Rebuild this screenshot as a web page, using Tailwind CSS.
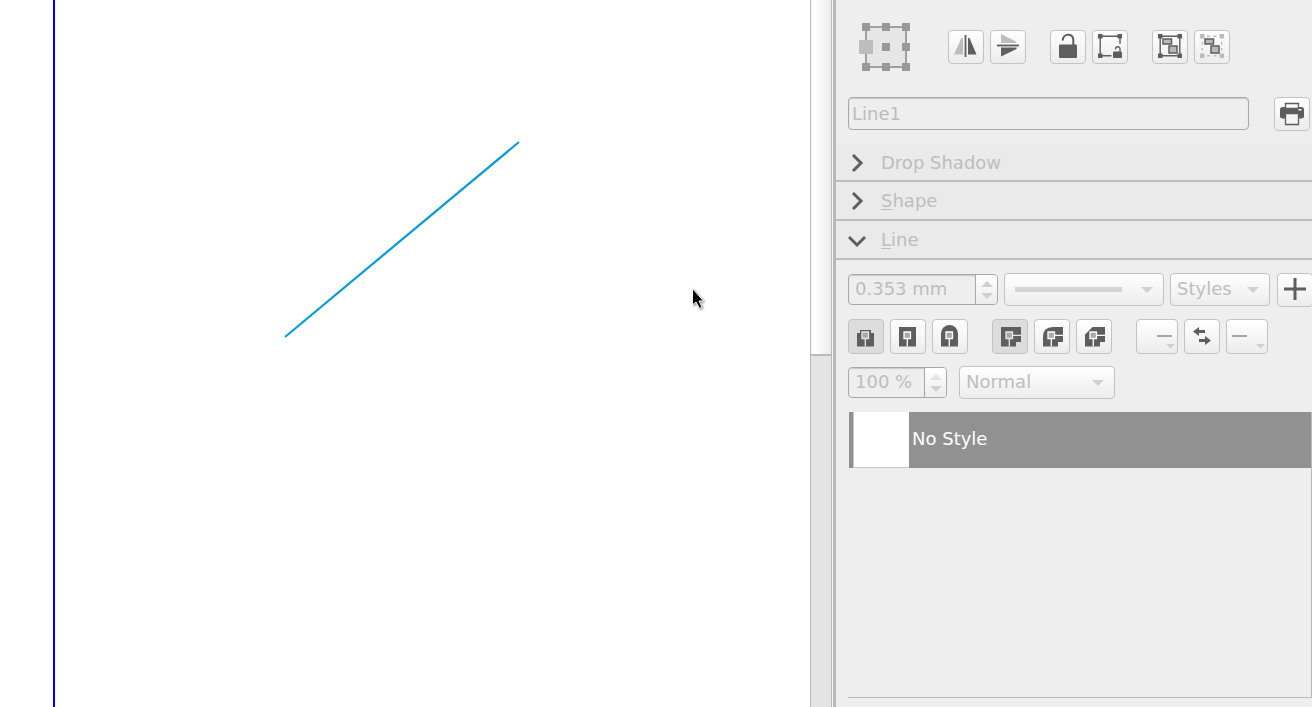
<!DOCTYPE html>
<html lang="en">
  <head>
    <meta charset="UTF-8" />
    <meta name="viewport" content="width=device-width, initial-scale=1.0" />
    <script src="https://cdn.jsdelivr.net/npm/@tailwindcss/browser@4"></script>
    <title>Properties</title>
  </head>
  <body class="flex h-screen overflow-hidden bg-[#eeeeee] font-['DejaVu_Sans',sans-serif] text-[18px] leading-[24px] text-[#bdbdbd]">
    <!-- canvas -->
    <main class="relative flex-1 bg-white pl-[53px]">
      <div class="h-full border-l-2 border-[#0000fa]"></div>
      <svg class="absolute left-[280px] top-[136px]" width="244" height="206" viewBox="280 136 244 206">
        <path d="M285 337 519 142" stroke="#069bde" stroke-width="2.200" />
      </svg>
      <svg class="absolute left-[690px] top-[286px]" width="18" height="26" viewBox="690 287 18 26">
        <path d="M692.500 289.500v16.500l3.500-3 3.500 6.500 2.500-1.500-3-6h4.500z" fill="#000" stroke="#fff" stroke-width="1" style="filter: drop-shadow(1px 1px 1px rgb(0 0 0 / 0.5))" />
      </svg>
    </main>

    <!-- scrollbar -->
    <div class="flex w-[22px] flex-col border-x border-[#b9b9b9] bg-[#e4e4e4]">
      <div class="h-[356px] border-b-2 border-[#b9b9b9] bg-linear-to-r from-white from-20% to-[#ebebeb]"></div>
    </div>
    <div class="w-1 border-l border-l-[#f6f6f6] bg-[#b9b9b9]"></div>

    <!-- properties panel -->
    <aside class="flex w-[476px] flex-col overflow-hidden">
      <div class="flex h-[97px] shrink-0 pl-[26px] pt-[23px]">
        <fieldset class="relative mr-[38px] grid h-12 w-12 grid-cols-3 content-between justify-between" aria-label="Basepoint">
          <span class="absolute inset-[3px] border-2 border-[#a0a0a0] bg-[#e6e6e6]"></span>
          <input type="radio" name="base" aria-label="Top left" class="relative size-2 appearance-none bg-[#999999]" />
          <input type="radio" name="base" aria-label="Top" class="relative size-2 appearance-none justify-self-center bg-[#999999]" />
          <input type="radio" name="base" aria-label="Top right" class="relative size-2 appearance-none justify-self-end bg-[#999999]" />
          <input type="radio" name="base" aria-label="Left" checked class="relative size-2 appearance-none bg-[#bdbdbd] ring-3 ring-[#bdbdbd]" />
          <input type="radio" name="base" aria-label="Center" class="relative size-2 appearance-none justify-self-center bg-[#999999]" />
          <input type="radio" name="base" aria-label="Right" class="relative size-2 appearance-none justify-self-end bg-[#999999]" />
          <input type="radio" name="base" aria-label="Bottom left" class="relative size-2 appearance-none bg-[#999999]" />
          <input type="radio" name="base" aria-label="Bottom" class="relative size-2 appearance-none justify-self-center bg-[#999999]" />
          <input type="radio" name="base" aria-label="Bottom right" class="relative size-2 appearance-none justify-self-end bg-[#999999]" />
        </fieldset>
        <div class="flex gap-6 pt-[7px]">
          <div class="flex gap-[6px]">
            <button aria-label="Flip horizontally" class="h-[34px] w-9 rounded border border-[#c3c3c3] bg-linear-to-b from-white to-[#ececec]">
              <svg width="34" height="32" viewBox="1 1 34 32">
                <path d="M6 24.500 13.500 8h1.500V24.500z" fill="#bdbdbd" />
                <path d="M20 8h1.500L28.500 24.500H20z" fill="#5e5e5e" />
                <path d="M17.500 5v22" stroke="#5e5e5e" stroke-width="1.800" />
              </svg>
            </button>
            <button aria-label="Flip vertically" class="h-[34px] w-9 rounded border border-[#c3c3c3] bg-linear-to-b from-white to-[#ececec]">
              <svg width="34" height="32" viewBox="1 1 34 32">
                <path d="M11 4 26 11.500v1.500H11z" fill="#bdbdbd" />
                <path d="M11 17.500h15.500v1.500L11 26.500z" fill="#5e5e5e" />
                <path d="M7 15.500h22" stroke="#5e5e5e" stroke-width="1.800" />
              </svg>
            </button>
          </div>
          <div class="flex gap-[6px]">
            <button aria-label="Lock" class="h-[34px] w-9 rounded border border-[#c3c3c3] bg-linear-to-b from-white to-[#ececec]">
              <svg width="34" height="32" viewBox="1 1 34 32">
                <rect x="9" y="14.500" width="18" height="13.500" rx="1" fill="#5e5e5e" />
                <path d="M12.800 10.500C12.800 3 23.300 3 23.300 9.500V15" fill="none" stroke="#5e5e5e" stroke-width="2" />
              </svg>
            </button>
            <button aria-label="Lock size" class="h-[34px] w-9 rounded border border-[#c3c3c3] bg-linear-to-b from-white to-[#ececec]">
              <svg width="34" height="32" viewBox="1 1 34 32" fill="#5e5e5e">
                <path d="M6 4h4.500v4.500H6zM25.500 4H30v4.500h-4.500zM6 23.500h4.500V28H6z" />
                <path d="M28 14V6.200H8.200v19.500h11.300" fill="none" stroke="#5e5e5e" stroke-width="1.400" />
                <rect x="21" y="21.500" width="9" height="6.500" rx="1" />
                <path d="M23.500 19.500C23.500 16 28 16 28 19V22" fill="none" stroke="#5e5e5e" stroke-width="1.400" />
              </svg>
            </button>
          </div>
          <div class="flex gap-[6px]">
            <button aria-label="Group" class="h-[34px] w-9 rounded border border-[#c3c3c3] bg-linear-to-b from-white to-[#ececec]">
              <svg width="34" height="32" viewBox="1 1 34 32" fill="#5e5e5e">
                <path d="M6 4h4.500v4.500H6zM25.500 4H30v4.500h-4.500zM6 23.500h4.500V28H6zM25.500 23.500H30V28h-4.500z" />
                <path d="M8.200 6.200h19.600v19.600H8.200z" fill="none" stroke="#5e5e5e" stroke-width="1.400" />
                <path d="M11 9h8.500v5H11zM17 16h8v7h-8z" fill="#b9b9b9" stroke="#5e5e5e" stroke-width="1.500" />
              </svg>
            </button>
            <button aria-label="Ungroup" class="h-[34px] w-9 rounded border border-[#c3c3c3] bg-linear-to-b from-white to-[#ececec]">
              <svg width="34" height="32" viewBox="1 1 34 32" fill="#bdbdbd">
                <path d="M6 4h4.500v4.500H6zM25.500 4H30v4.500h-4.500zM6 23.500h4.500V28H6zM25.500 23.500H30V28h-4.500z" />
                <path d="M13 6.300h3M19.500 6.300h3M13 25.700h3M19.500 25.700h3M8.300 12v2.500M8.300 18v2.500M27.700 12v2.500M27.700 18v2.500" stroke="#bdbdbd" stroke-width="1.500" />
                <path d="M11 9h8.500v5H11zM17 16h8v7h-8z" fill="#b9b9b9" stroke="#5e5e5e" stroke-width="1.500" />
              </svg>
            </button>
          </div>
        </div>
      </div>

      <div class="flex h-[47px] shrink-0 items-start pl-3">
        <input type="text" value="Line1" disabled aria-label="Name" class="mr-[25px] h-[33px] w-[401px] shrink-0 rounded border border-[#a8a8a8] px-[3px] shadow-[inset_0_1px_1px_#c8c8c8]" />
        <button aria-label="Print" class="h-[34px] w-9 shrink-0 rounded border border-[#c3c3c3] bg-linear-to-b from-white to-[#ececec]">
          <svg width="34" height="32" viewBox="1 1 34 32">
            <rect x="6" y="10" width="24" height="11.500" rx="2.500" fill="#5e5e5e" />
            <path d="M11.500 6.500h13v5h-13z" fill="#f9f9f9" stroke="#5e5e5e" stroke-width="1.300" />
            <path d="M11 11h14.500v3H11z" fill="#5e5e5e" />
            <path d="M11.500 16.500h13v11h-13z" fill="#f5f5f5" stroke="#5e5e5e" stroke-width="1.300" />
            <path d="M24.500 12h3v1.500h-3z" fill="#fff" />
          </svg>
        </button>
      </div>

      <button class="flex h-[38px] shrink-0 items-center border-b-2 border-[#bdbdbd] bg-[#eaeaea] pl-3 pt-px text-left">
        <svg class="mr-[15px]" width="18" height="20" viewBox="0 0 18 20"><path d="m5 2 8 8-8 8" fill="none" stroke="#5e5e5e" stroke-width="3" /></svg>
        Drop Shadow
      </button>
      <button class="flex h-[39px] shrink-0 items-center border-b-2 border-[#bdbdbd] bg-[#eaeaea] pl-3 pt-px text-left">
        <svg class="mr-[15px]" width="18" height="20" viewBox="0 0 18 20"><path d="m5 2 8 8-8 8" fill="none" stroke="#5e5e5e" stroke-width="3" /></svg>
        <span><u class="decoration-1 underline-offset-2">S</u>hape</span>
      </button>
      <button aria-expanded="true" class="flex h-[39px] shrink-0 items-center border-b-2 border-[#bdbdbd] bg-[#eaeaea] pl-3 pt-px text-left">
        <svg class="mr-[15px]" width="18" height="20" viewBox="0 0 18 20"><path d="m1 7 8 8 8-8" fill="none" stroke="#5e5e5e" stroke-width="3" /></svg>
        <span><u class="decoration-1 underline-offset-2">L</u>ine</span>
      </button>

      <!-- line width, type, style -->
      <div class="mt-[13px] flex h-[34px] shrink-0 items-start pl-3">
        <div class="mr-[6px] mt-px flex h-[31px] w-[150px] shrink-0 overflow-hidden rounded border border-[#a8a8a8]">
          <input type="text" value="0.353 mm" disabled aria-label="Line width" class="min-w-0 flex-1 px-[6px] pb-px shadow-[inset_0_1px_1px_#c8c8c8]" />
          <div class="flex w-[22px] flex-col justify-center gap-[6px] border-l border-[#a8a8a8] bg-linear-to-b from-white to-[#ececec]">
            <button disabled aria-label="Increase line width" class="flex justify-center"><svg width="12" height="6"><path d="M0 6 6 0l6 6z" fill="#d0d0d0" /></svg></button>
            <button disabled aria-label="Decrease line width" class="flex justify-center"><svg width="12" height="6"><path d="M0 0h12L6 6z" fill="#d0d0d0" /></svg></button>
          </div>
        </div>
        <div class="mr-[6px] grid h-[33px] w-[160px] shrink-0 items-center">
          <select disabled aria-label="Line type" class="col-start-1 row-start-1 h-full w-full appearance-none rounded border border-[#c3c3c3] bg-linear-to-b from-white to-[#ececec] opacity-100"><option></option></select>
          <span class="z-10 col-start-1 row-start-1 ml-[11px] h-[5px] w-[107px] bg-[#d4d4d4]"></span>
          <svg class="z-10 col-start-1 row-start-1 mr-[11px] justify-self-end" width="12" height="6"><path d="M0 0h12L6 6z" fill="#d0d0d0" /></svg>
        </div>
        <div class="mr-[7px] grid h-[33px] w-[100px] shrink-0 items-center">
          <select disabled aria-label="Line styles" class="col-start-1 row-start-1 h-full w-full appearance-none rounded border border-[#c3c3c3] bg-linear-to-b from-white to-[#ececec] pb-[2px] pl-[6px] opacity-100"><option>Styles</option></select>
          <svg class="z-10 col-start-1 row-start-1 mr-[11px] justify-self-end" width="12" height="6"><path d="M0 0h12L6 6z" fill="#d0d0d0" /></svg>
        </div>
        <button aria-label="Add style" class="h-[34px] w-9 shrink-0 rounded border border-[#c3c3c3] bg-linear-to-b from-white to-[#ececec]">
          <svg width="34" height="32" viewBox="1 1 34 32"><path d="M7 16h22M18 5v22" stroke="#5e5e5e" stroke-width="3" /></svg>
        </button>
      </div>

      <!-- caps, joins, arrow heads -->
      <div class="mt-3 flex shrink-0 gap-6 pl-3">
        <div class="flex gap-[6px]">
          <button aria-label="Flat cap" aria-pressed="true" class="h-[35px] w-9 rounded border border-[#c3c3c3] bg-[#dcdcdc]">
            <svg width="34" height="33" viewBox="1 1 34 33">
              <path d="M9 14h3v-3h11v3h3v13.500H9z" fill="#5e5e5e" />
              <path d="M14 13h6.500v6.500H14zM17.300 19.500v8" fill="#a8a8a8" stroke="#e6e6e6" stroke-width="1.300" />
            </svg>
          </button>
          <button aria-label="Square cap" class="h-[35px] w-9 rounded border border-[#c3c3c3] bg-linear-to-b from-white to-[#ececec]">
            <svg width="34" height="33" viewBox="1 1 34 33">
              <path d="M9 8h17v19.500H9z" fill="#5e5e5e" />
              <path d="M14 13h6.500v6.500H14zM17.300 19.500v8" fill="#a8a8a8" stroke="#fff" stroke-width="1.300" />
            </svg>
          </button>
          <button aria-label="Round cap" class="h-[35px] w-9 rounded border border-[#c3c3c3] bg-linear-to-b from-white to-[#ececec]">
            <svg width="34" height="33" viewBox="1 1 34 33">
              <path d="M9 27.500V14.500a8.500 8.500 0 0 1 17 0v13z" fill="#5e5e5e" />
              <path d="M14 13h6.500v6.500H14zM17.300 19.500v8" fill="#a8a8a8" stroke="#fff" stroke-width="1.300" />
            </svg>
          </button>
        </div>
        <div class="flex gap-[6px]">
          <button aria-label="Miter join" aria-pressed="true" class="h-[35px] w-9 rounded border border-[#c3c3c3] bg-[#dcdcdc]">
            <svg width="34" height="33" viewBox="1 1 34 33">
              <path d="M9 8h20v15h-5v4.500H9z" fill="#5e5e5e" />
              <path d="M14 13h6.500v6.500H14zM17.300 19.500v8M20.500 16.300h8.500" fill="#a8a8a8" stroke="#e6e6e6" stroke-width="1.300" />
            </svg>
          </button>
          <button aria-label="Round join" class="h-[35px] w-9 rounded border border-[#c3c3c3] bg-linear-to-b from-white to-[#ececec]">
            <svg width="34" height="33" viewBox="1 1 34 33">
              <path d="M9 27.500V18Q9 8 19 8h10v15h-5v4.500z" fill="#5e5e5e" />
              <path d="M14 13h6.500v6.500H14zM17.300 19.500v8M20.500 16.300h8.500" fill="#a8a8a8" stroke="#fff" stroke-width="1.300" />
            </svg>
          </button>
          <button aria-label="Bevel join" class="h-[35px] w-9 rounded border border-[#c3c3c3] bg-linear-to-b from-white to-[#ececec]">
            <svg width="34" height="33" viewBox="1 1 34 33">
              <path d="M9 27.500V15.500L16.500 8H29v15h-5v4.500z" fill="#5e5e5e" />
              <path d="M14 13h6.500v6.500H14zM17.300 19.500v8M20.500 16.300h8.500" fill="#a8a8a8" stroke="#fff" stroke-width="1.300" />
            </svg>
          </button>
        </div>
        <div class="flex gap-[6px]">
          <button disabled aria-label="Start arrow" class="h-[35px] w-[42px] rounded border border-[#c3c3c3] bg-linear-to-b from-white to-[#ececec]">
            <svg width="40" height="33" viewBox="1 1 40 33">
              <path d="M21 17h15" stroke="#a8a8a8" stroke-width="2" />
              <path d="M30 25h9l-4.500 4.500z" fill="#d0d0d0" />
            </svg>
          </button>
          <button aria-label="Swap arrows" class="h-[35px] w-9 rounded border border-[#c3c3c3] bg-linear-to-b from-white to-[#ececec]">
            <svg width="34" height="33" viewBox="1 1 34 33" fill="#5e5e5e">
              <path d="M9 12.500 15 8v3h6v3h-6v3zM27 21.500 21 17v3h-6v3h6v3z" />
            </svg>
          </button>
          <button disabled aria-label="End arrow" class="h-[35px] w-[42px] rounded border border-[#c3c3c3] bg-linear-to-b from-white to-[#ececec]">
            <svg width="40" height="33" viewBox="1 1 40 33">
              <path d="M6 17h15" stroke="#a8a8a8" stroke-width="2" />
              <path d="M30 25h9l-4.500 4.500z" fill="#d0d0d0" />
            </svg>
          </button>
        </div>
      </div>

      <!-- opacity and blend mode -->
      <div class="mt-3 flex shrink-0 items-start pl-3">
        <div class="mr-3 mt-px flex h-[31px] w-[99px] shrink-0 overflow-hidden rounded border border-[#a8a8a8]">
          <input type="text" value="100 %" disabled aria-label="Opacity" class="min-w-0 flex-1 px-[6px] pb-px shadow-[inset_0_1px_1px_#c8c8c8]" />
          <div class="flex w-[22px] flex-col justify-center gap-[6px] border-l border-[#a8a8a8] bg-linear-to-b from-white to-[#ececec]">
            <button disabled aria-label="Increase opacity" class="flex justify-center"><svg width="12" height="6"><path d="M0 6 6 0l6 6z" fill="#e4e4e4" /></svg></button>
            <button disabled aria-label="Decrease opacity" class="flex justify-center"><svg width="12" height="6"><path d="M0 0h12L6 6z" fill="#d0d0d0" /></svg></button>
          </div>
        </div>
        <div class="grid h-[33px] w-[156px] items-center">
          <select disabled aria-label="Blend mode" class="col-start-1 row-start-1 h-full w-full appearance-none rounded border border-[#c3c3c3] bg-linear-to-b from-white to-[#ececec] pb-[2px] pl-[6px] opacity-100"><option>Normal</option></select>
          <svg class="z-10 col-start-1 row-start-1 mr-[11px] justify-self-end" width="12" height="6"><path d="M0 0h12L6 6z" fill="#d0d0d0" /></svg>
        </div>
      </div>

      <ul class="mb-[9px] ml-3 mt-[13px] flex-1 border-b border-r border-[#b9b9b9] pl-px">
        <li class="flex h-14 bg-[#919191] text-white">
          <span class="ml-1 mr-[3px] w-14 border-b border-l border-[#c8c8c8] bg-white"></span>
          <span class="mt-[15px]">No Style</span>
        </li>
      </ul>
    </aside>
  </body>
</html>
